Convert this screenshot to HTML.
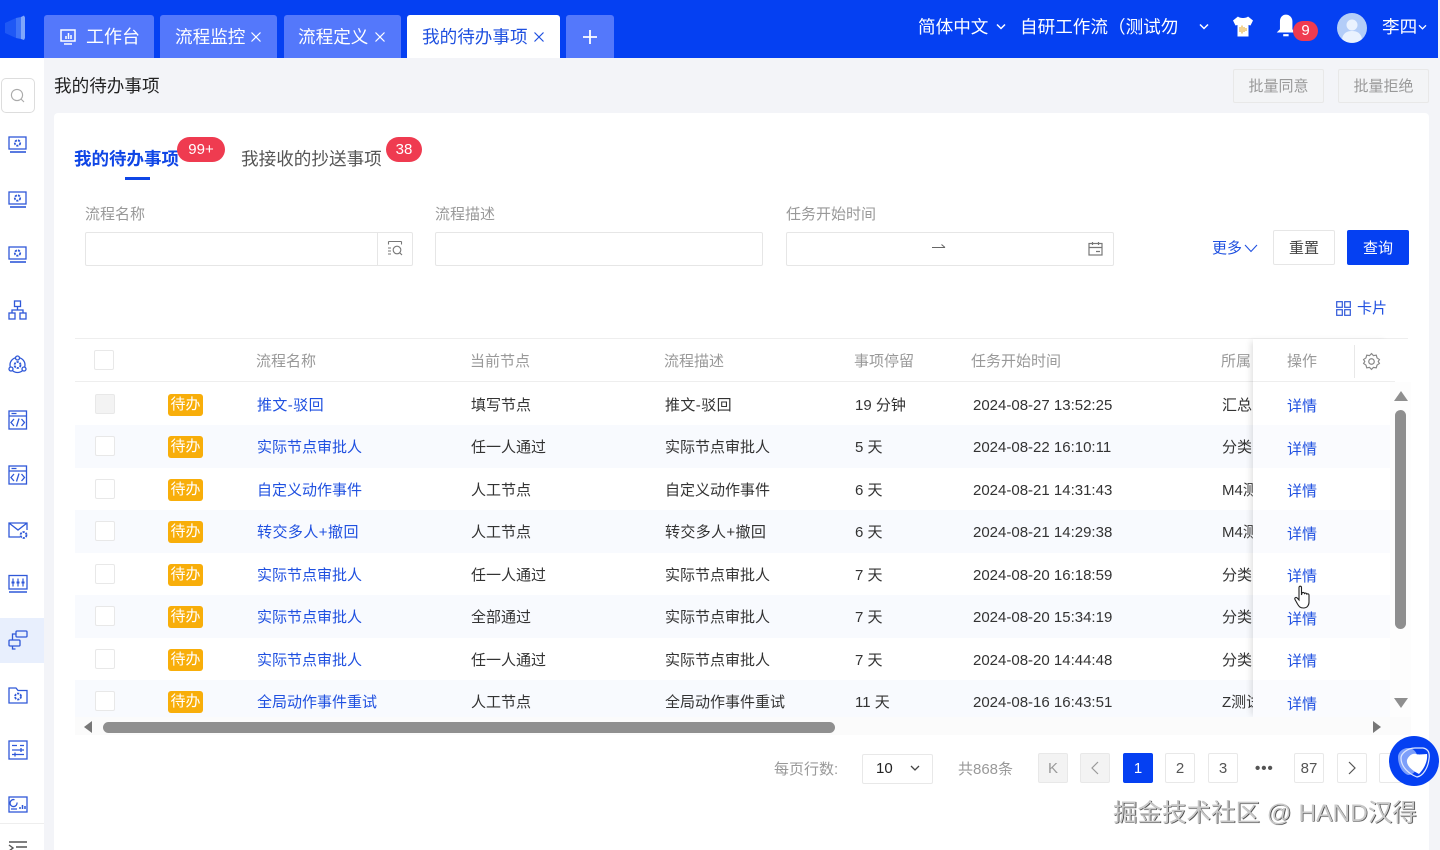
<!DOCTYPE html>
<html lang="zh-CN">
<head>
<meta charset="utf-8">
<title>我的待办事项</title>
<style>
html,body{margin:0;padding:0;width:1440px;height:850px;overflow:hidden;background:#f3f4f8;font-family:"Liberation Sans","Noto Sans CJK SC",sans-serif;color:#333}
div,span,svg{position:absolute;box-sizing:border-box}
.t{white-space:nowrap;line-height:20px;font-size:15px}
.tab{top:15px;height:43px;background:#5478fb;border-radius:3px 3px 0 0}
.tabt{top:25px;line-height:24px;font-size:17.6px;color:#fff;white-space:nowrap}
.g{color:#999}
.l{color:#1f50e0}
.hd{top:352px;color:#999}
.row{left:75px;width:1315px;height:42.5px}
.alt{background:#f8fafe}
.cb{left:95px;width:20px;height:20px;border:1px solid #e8e8e8;border-radius:2px;background:#fff}
.tag{left:168px;width:35px;height:22px;background:#f8ae0a;border-radius:3px;color:#fff;font-size:15px;line-height:22px;text-align:center;white-space:nowrap}
.input{top:232px;height:34px;background:#fff;border:1px solid #e6e6e6;border-radius:2px}
.pg{top:753px;width:30px;height:30px;background:#fff;border:1px solid #e8e8e8;border-radius:2px;text-align:center;line-height:29px;font-size:15px;color:#555}
.ic{left:8px;width:20px;height:20px;fill:none;stroke:#2f58d8;stroke-width:1.3}
.gr{stroke-width:1.8;stroke-dasharray:2.2 1}
</style>
</head>
<body>
<!-- sidebar -->
<div style="left:0;top:58px;width:44px;height:792px;background:#fff"></div>
<div style="left:0;top:618px;width:44px;height:45px;background:#e8effd"></div>
<div style="left:0;top:823px;width:44px;height:1px;background:#eee"></div>
<div style="left:1px;top:78px;width:34px;height:35px;border:1px solid #ddd;border-radius:5px;background:#fff"></div>
<svg style="left:9px;top:87px;width:17px;height:17px" viewBox="0 0 17 17" fill="none" stroke="#aaa" stroke-width="1.1"><circle cx="8" cy="8" r="5.6"/><path d="M12 12l3 3"/></svg>

<svg class="ic" style="top:135px" viewBox="0 0 20 20"><rect x="1" y="2" width="17" height="12"/><circle class="gr" cx="9.500" cy="8" r="2.700"/><path d="M2 17h16" stroke-width="1.600"/></svg>
<svg class="ic" style="top:190px" viewBox="0 0 20 20"><rect x="1" y="2" width="17" height="12"/><circle class="gr" cx="9.500" cy="8" r="2.700"/><path d="M2 17h16" stroke-width="1.600"/></svg>
<svg class="ic" style="top:245px" viewBox="0 0 20 20"><rect x="1" y="2" width="17" height="12"/><circle class="gr" cx="9.500" cy="8" r="2.700"/><path d="M2 17h16" stroke-width="1.600"/></svg>
<svg class="ic" style="top:300px" viewBox="0 0 20 20"><rect x="6.500" y="1" width="6" height="5.500"/><rect x="1" y="13" width="6" height="6"/><rect x="12" y="13" width="6" height="6"/><path d="M9.500 6.500v3.500M4 13v-3h11v3"/></svg>
<svg class="ic" style="top:355px" viewBox="0 0 20 20"><circle cx="9.500" cy="10" r="7.500"/><circle class="gr" cx="9.500" cy="10" r="3"/><circle cx="9.500" cy="3" r="2" fill="#fff"/><circle cx="3" cy="14" r="2" fill="#fff"/><circle cx="16" cy="14" r="2" fill="#fff"/></svg>
<svg class="ic" style="top:410px" viewBox="0 0 20 20"><rect x="1" y="1" width="17.500" height="18"/><path d="M1 6h17.500M3.500 3.500h5"/><path d="M6 9l-3 3.500 3 3.500M13.500 9l3 3.500-3 3.500M11 8.500l-2.500 8"/></svg>
<svg class="ic" style="top:465px" viewBox="0 0 20 20"><rect x="1" y="1" width="17.500" height="18"/><path d="M1 6h17.500M3.500 3.500h5"/><path d="M6 9l-3 3.500 3 3.500M13.500 9l3 3.500-3 3.500M11 8.500l-2.500 8"/></svg>
<svg class="ic" style="top:520px" viewBox="0 0 20 20"><path d="M19 10V3H1v14h11M1 3l9 7 9-7"/><circle class="gr" cx="15.500" cy="15" r="3"/></svg>
<svg class="ic" style="top:574px" viewBox="0 0 20 20"><rect x="1" y="1.500" width="18" height="13.500"/><path d="M5 4.500v8M10 4.500v8M15 4.500v8" stroke-width="1.200"/><path d="M3.500 8.500h3M8.500 8.500h3M13.500 8.500h3" stroke-width="2"/><path d="M1 18h18" stroke-width="1.500"/></svg>
<svg class="ic" style="top:630px" viewBox="0 0 20 20"><rect x="8" y="1" width="11" height="6" rx="1"/><rect x="1" y="10" width="11" height="6" rx="1"/><path d="M8 4H4.500v6M4.500 16v3h3"/></svg>
<svg class="ic" style="top:685px" viewBox="0 0 20 20"><path d="M1 3h7l2 2.500h9V18H1z"/><circle class="gr" cx="10" cy="11.500" r="3"/></svg>
<svg class="ic" style="top:740px" viewBox="0 0 20 20"><rect x="1" y="1" width="18" height="18"/><path d="M4 5.500h5M12 5.500h4M4 10h12M13 8v4M4 14.500h12M7 12.500v4"/></svg>
<svg class="ic" style="top:795px" viewBox="0 0 20 20"><rect x="1" y="2" width="18" height="15"/><path d="M9 7.500a3.500 3.500 0 1 1-2.500-2.800M3 14h6"/><path d="M12 14v-2M14.500 14v-4M17 14v-3" stroke-width="1.500"/></svg>
<svg style="left:8px;top:841px;width:20px;height:9px" viewBox="0 0 20 9" fill="none" stroke="#555" stroke-width="1.400"><path d="M1 1h18M8 6h11M1 4l4 3-4 3"/></svg>

<!-- header -->
<div style="left:0;top:0;width:1438px;height:58px;background:#0540f2"></div>
<svg style="left:4px;top:14px;width:22px;height:28px" viewBox="0 0 22 28"><path d="M1 9l11-5v20L1 19z" fill="#1f58f5"/><path d="M12 4l5-1v22l-5-1z" fill="#3f74f8"/><path d="M17 3l3-1.500 1 2V24l-1 2-3-1z" fill="#7fa6fb"/></svg>

<div class="tab" style="left:44px;width:110px"></div>
<svg style="left:59px;top:28px;width:18px;height:18px" viewBox="0 0 18 18" fill="none" stroke="#fff" stroke-width="1.500"><rect x="2" y="2" width="14" height="11"/><path d="M5 16h8"/><path d="M7 11V8M9.500 11V5M12 11V7"/></svg>
<div class="tabt" style="left:86px;font-size:18px">工作台</div>
<div class="tab" style="left:160px;width:117px"></div>
<div class="tabt" style="left:175px">流程监控</div>
<svg style="left:250px;top:31px;width:12px;height:12px" viewBox="0 0 12 12" stroke="#fff" stroke-width="1.200"><path d="M1.500 1.500l9 9M10.500 1.500l-9 9"/></svg>
<div class="tab" style="left:284px;width:117px"></div>
<div class="tabt" style="left:298px">流程定义</div>
<svg style="left:374px;top:31px;width:12px;height:12px" viewBox="0 0 12 12" stroke="#fff" stroke-width="1.200"><path d="M1.500 1.500l9 9M10.500 1.500l-9 9"/></svg>
<div class="tab" style="left:407px;width:153px;background:#fff"></div>
<div class="tabt" style="left:422px;color:#1f50e0">我的待办事项</div>
<svg style="left:533px;top:31px;width:12px;height:12px" viewBox="0 0 12 12" stroke="#1f50e0" stroke-width="1.200"><path d="M1.500 1.500l9 9M10.500 1.500l-9 9"/></svg>
<div class="tab" style="left:566px;width:48px"></div>
<svg style="left:582px;top:29px;width:16px;height:16px" viewBox="0 0 16 16" stroke="#fff" stroke-width="1.800"><path d="M8 1v14M1 8h14"/></svg>

<div class="tabt" style="left:918px;top:15px">简体中文</div>
<svg style="left:996px;top:23px;width:10px;height:8px" viewBox="0 0 10 8" fill="none" stroke="#fff" stroke-width="1.500"><path d="M1 1.500l4 4 4-4"/></svg>
<div class="tabt" style="left:1020px;top:15px">自研工作流（测试勿</div>
<svg style="left:1199px;top:23px;width:10px;height:8px" viewBox="0 0 10 8" fill="none" stroke="#fff" stroke-width="1.500"><path d="M1 1.500l4 4 4-4"/></svg>
<svg style="left:1232px;top:15px;width:22px;height:23px" viewBox="0 0 22 23"><path d="M6 1.500L1 5.500l2.500 5L5.500 10v11.500h11V10l2 .5 2.500-5-5-4c-1.500 2-8.500 2-10 0z" fill="#fff"/><path d="M8 12v5M10 10.500v8M12 12v5M14 13v3" stroke="#e9b64a" stroke-width="1.200"/></svg>
<svg style="left:1275px;top:13px;width:24px;height:26px" viewBox="0 0 22 24"><path d="M10 1.500c-3.500 0-5.500 3-5.500 6V15L1.500 18h17L16 15V7.500c0-3-2.500-6-6-6z" fill="#fff"/><path d="M7.500 20.500h5" stroke="#fff" stroke-width="2"/></svg>
<div style="left:1293px;top:21px;width:25px;height:20px;border-radius:10px;background:#ef3b50;color:#fff;font-size:15px;line-height:20px;text-align:center">9</div>
<svg style="left:1337px;top:13px;width:30px;height:30px" viewBox="0 0 30 30"><circle cx="15" cy="15" r="15" fill="#b3cdf8"/><circle cx="15" cy="12" r="5.500" fill="#eaf2fe"/><path d="M5 26c1-6 5-8 10-8s9 2 10 8c-5 5-15 5-20 0z" fill="#eaf2fe"/></svg>
<div class="tabt" style="left:1382px;top:15px">李四</div>
<svg style="left:1418px;top:24px;width:9px;height:7px" viewBox="0 0 10 8" fill="none" stroke="#fff" stroke-width="1.500"><path d="M1 1.500l4 4 4-4"/></svg>

<!-- page title -->
<div class="t" style="left:54px;top:75px;font-size:17.600px;line-height:22px;color:#222">我的待办事项</div>
<div style="left:1233px;top:69px;width:91px;height:34px;background:#f3f4f6;border:1px solid #e8e8e8;border-radius:2px;color:#999;font-size:15px;line-height:33px;text-align:center">批量同意</div>
<div style="left:1338px;top:69px;width:91px;height:34px;background:#f3f4f6;border:1px solid #e8e8e8;border-radius:2px;color:#999;font-size:15px;line-height:33px;text-align:center">批量拒绝</div>

<!-- card -->
<div style="left:54px;top:113px;width:1375px;height:737px;background:#fff;border-radius:4px 4px 0 0"></div>

<div class="t" style="left:74px;top:147.500px;font-size:17.500px;line-height:22px;font-weight:700;color:#0f46e6">我的待办事项</div>
<div style="left:177px;top:137px;width:48px;height:25px;border-radius:13px;background:#ef3b50;color:#fff;font-size:15px;line-height:25px;text-align:center">99+</div>
<div style="left:125px;top:176.500px;width:25px;height:3px;background:#0f46e6"></div>
<div class="t" style="left:241px;top:147.500px;font-size:17.600px;line-height:22px;color:#555">我接收的抄送事项</div>
<div style="left:386px;top:137px;width:36px;height:25px;border-radius:13px;background:#ef3b50;color:#fff;font-size:15px;line-height:25px;text-align:center">38</div>

<!-- filters -->
<div class="t g" style="left:85px;top:204.500px">流程名称</div>
<div class="t g" style="left:435px;top:204.500px">流程描述</div>
<div class="t g" style="left:786px;top:204.500px">任务开始时间</div>
<div class="input" style="left:85px;width:328px"></div>
<div style="left:377px;top:232px;width:1px;height:34px;background:#e6e6e6"></div>
<svg style="left:387px;top:240px;width:16px;height:16px" viewBox="0 0 16 16" fill="none" stroke="#777" stroke-width="1.100"><path d="M1.500 1.500h13M1.500 1.500v3M14.500 1.500v3M1 8h3M1 11h3M1 14h3"/><circle cx="10" cy="10" r="3.800"/><path d="M12.800 12.800l2.200 2.200"/></svg>
<div class="input" style="left:435px;width:328px"></div>
<div class="input" style="left:786px;width:328px"></div>
<svg style="left:931px;top:243px;width:15px;height:9px" viewBox="0 0 15 9" fill="none" stroke="#666" stroke-width="1.100"><path d="M1 4.500h13M10.500 1.500l3.500 3"/></svg>
<svg style="left:1088px;top:241px;width:15px;height:15px" viewBox="0 0 15 15" fill="none" stroke="#777" stroke-width="1.200"><rect x="1" y="2.500" width="13" height="11.500"/><path d="M1 6.500h13M4.500 1v3M10.500 1v3M8 10.500h4"/></svg>
<div class="t l" style="left:1212px;top:238.500px">更多</div>
<svg style="left:1244px;top:244px;width:14px;height:9px" viewBox="0 0 14 9" fill="none" stroke="#1f50e0" stroke-width="1.100"><path d="M1 1l6 6.500L13 1"/></svg>
<div style="left:1273px;top:230px;width:62px;height:35px;border:1px solid #e6e6e6;border-radius:2px;background:#fff;font-size:15px;line-height:36px;text-align:center;color:#444">重置</div>
<div style="left:1347px;top:230px;width:62px;height:35px;border-radius:2px;background:#0540f2;font-size:15px;line-height:37px;text-align:center;color:#fff">查询</div>
<svg style="left:1336px;top:301px;width:15px;height:15px" viewBox="0 0 15 15" fill="none" stroke="#2f58d8" stroke-width="1.200"><rect x=".7" y=".7" width="5.600" height="5.600"/><rect x="8.700" y=".7" width="5.600" height="5.600"/><rect x=".7" y="8.700" width="5.600" height="5.600"/><rect x="8.700" y="8.700" width="5.600" height="5.600"/></svg>
<div class="t l" style="left:1357px;top:299px">卡片</div>

<!-- table rows backgrounds -->
<div class="row alt" style="top:425px"></div>
<div class="row alt" style="top:510px"></div>
<div class="row alt" style="top:595px"></div>
<div class="row alt" style="top:680px;height:38px"></div>
<div style="left:75px;top:338px;width:1333px;height:1px;background:#eee"></div>
<div style="left:75px;top:381px;width:1320px;height:1px;background:#eee"></div>

<!-- table header -->
<div class="cb" style="left:94px;top:350px"></div>
<div class="t hd" style="left:256px">流程名称</div>
<div class="t hd" style="left:470px">当前节点</div>
<div class="t hd" style="left:664px">流程描述</div>
<div class="t hd" style="left:854px">事项停留</div>
<div class="t hd" style="left:971px">任务开始时间</div>
<div class="t hd" style="left:1221px">所属</div>

<!-- rows -->
<div class="cb" style="top:394px;background:#f3f3f3"></div><div class="tag" style="top:394px">待办</div>
<div class="t l" style="left:257px;top:396px;letter-spacing:.4px">推文-驳回</div><div class="t" style="left:471px;top:396px">填写节点</div><div class="t" style="left:665px;top:396px;letter-spacing:.4px">推文-驳回</div><div class="t" style="left:855px;top:396px">19 分钟</div><div class="t" style="left:973px;top:396px">2024-08-27 13:52:25</div><div class="t" style="left:1222px;top:396px">汇总</div>

<div class="cb" style="top:436px"></div><div class="tag" style="top:436px">待办</div>
<div class="t l" style="left:257px;top:438px">实际节点审批人</div><div class="t" style="left:471px;top:438px">任一人通过</div><div class="t" style="left:665px;top:438px">实际节点审批人</div><div class="t" style="left:855px;top:438px">5 天</div><div class="t" style="left:973px;top:438px">2024-08-22 16:10:11</div><div class="t" style="left:1222px;top:438px">分类</div>

<div class="cb" style="top:479px"></div><div class="tag" style="top:479px">待办</div>
<div class="t l" style="left:257px;top:481px">自定义动作事件</div><div class="t" style="left:471px;top:481px">人工节点</div><div class="t" style="left:665px;top:481px">自定义动作事件</div><div class="t" style="left:855px;top:481px">6 天</div><div class="t" style="left:973px;top:481px">2024-08-21 14:31:43</div><div class="t" style="left:1222px;top:481px">M4测</div>

<div class="cb" style="top:521px"></div><div class="tag" style="top:521px">待办</div>
<div class="t l" style="left:257px;top:523px;letter-spacing:.45px">转交多人+撤回</div><div class="t" style="left:471px;top:523px">人工节点</div><div class="t" style="left:665px;top:523px;letter-spacing:.35px">转交多人+撤回</div><div class="t" style="left:855px;top:523px">6 天</div><div class="t" style="left:973px;top:523px">2024-08-21 14:29:38</div><div class="t" style="left:1222px;top:523px">M4测</div>

<div class="cb" style="top:564px"></div><div class="tag" style="top:564px">待办</div>
<div class="t l" style="left:257px;top:566px">实际节点审批人</div><div class="t" style="left:471px;top:566px">任一人通过</div><div class="t" style="left:665px;top:566px">实际节点审批人</div><div class="t" style="left:855px;top:566px">7 天</div><div class="t" style="left:973px;top:566px">2024-08-20 16:18:59</div><div class="t" style="left:1222px;top:566px">分类</div>

<div class="cb" style="top:606px"></div><div class="tag" style="top:606px">待办</div>
<div class="t l" style="left:257px;top:608px">实际节点审批人</div><div class="t" style="left:471px;top:608px">全部通过</div><div class="t" style="left:665px;top:608px">实际节点审批人</div><div class="t" style="left:855px;top:608px">7 天</div><div class="t" style="left:973px;top:608px">2024-08-20 15:34:19</div><div class="t" style="left:1222px;top:608px">分类</div>

<div class="cb" style="top:649px"></div><div class="tag" style="top:649px">待办</div>
<div class="t l" style="left:257px;top:651px">实际节点审批人</div><div class="t" style="left:471px;top:651px">任一人通过</div><div class="t" style="left:665px;top:651px">实际节点审批人</div><div class="t" style="left:855px;top:651px">7 天</div><div class="t" style="left:973px;top:651px">2024-08-20 14:44:48</div><div class="t" style="left:1222px;top:651px">分类</div>

<div class="cb" style="top:691px"></div><div class="tag" style="top:691px">待办</div>
<div class="t l" style="left:257px;top:693px">全局动作事件重试</div><div class="t" style="left:471px;top:693px">人工节点</div><div class="t" style="left:665px;top:693px">全局动作事件重试</div><div class="t" style="left:855px;top:693px">11 天</div><div class="t" style="left:973px;top:693px">2024-08-16 16:43:51</div><div class="t" style="left:1222px;top:693px">Z测试</div>

<!-- fixed column -->
<div style="left:1253px;top:339px;width:137px;height:378px;background:#fff;box-shadow:-4px 0 6px -2px rgba(0,0,0,.12)"></div>
<div style="left:1253px;top:425px;width:137px;height:42.500px;background:#fafbfe"></div>
<div style="left:1253px;top:510px;width:137px;height:42.500px;background:#fafbfe"></div>
<div style="left:1253px;top:595px;width:137px;height:42.500px;background:#fafbfe"></div>
<div style="left:1253px;top:680px;width:137px;height:37px;background:#fafbfe"></div>
<div style="left:1253px;top:381px;width:137px;height:1px;background:#eee"></div>
<div class="t hd" style="left:1287px">操作</div>
<div style="left:1354px;top:345px;width:1px;height:33px;background:#e8e8e8"></div>
<svg style="left:1362px;top:352px;width:19px;height:19px" viewBox="0 0 24 24" fill="none" stroke="#888" stroke-width="1.500"><path d="M12 2l2.500 2.600 3.500-.6 1 3.500 3 2-1.500 2.500 1.500 2.500-3 2-1 3.500-3.500-.6L12 22l-2.500-2.600-3.500.6-1-3.500-3-2L3.500 12 2 9.500l3-2L6 4l3.500.6z"/><circle cx="12" cy="12" r="3.500"/></svg>
<div class="t l" style="left:1287px;top:397px">详情</div>
<div class="t l" style="left:1287px;top:440px">详情</div>
<div class="t l" style="left:1287px;top:482px">详情</div>
<div class="t l" style="left:1287px;top:525px">详情</div>
<div class="t l" style="left:1287px;top:567px">详情</div>
<div class="t l" style="left:1287px;top:610px">详情</div>
<div class="t l" style="left:1287px;top:652px">详情</div>
<div class="t l" style="left:1287px;top:695px">详情</div>
<!-- cursor -->
<svg style="left:1294px;top:585px;width:20px;height:25px" viewBox="0 0 20 25"><path d="M5 2.500c0-1.800 2.500-1.800 2.500 0V10l.5-2c1-1 2.300-.5 2.500.5.800-.8 2.200-.4 2.400.6.800-.6 2.100-.2 2.100 1V17c0 3.500-2 6-5.500 6S5 21.500 3.500 19L1 14.500c-.8-1.500 1-2.800 2.200-1.500L5 15z" fill="#fff" stroke="#222" stroke-width="1.100"/></svg>

<!-- scrollbars -->
<div style="left:1390px;top:382px;width:21px;height:335px;background:#fdfdfd"></div>
<svg style="left:1394px;top:391px;width:14px;height:10px" viewBox="0 0 14 10"><path d="M7 0l7 10H0z" fill="#8f8f8f"/></svg>
<div style="left:1395px;top:410px;width:11px;height:219px;background:#8f8f8f;border-radius:6px"></div>
<svg style="left:1394px;top:698px;width:14px;height:10px" viewBox="0 0 14 10"><path d="M7 10l7-10H0z" fill="#8f8f8f"/></svg>
<div style="left:75px;top:717px;width:1336px;height:18px;background:#fbfbfb"></div>
<svg style="left:83px;top:721px;width:10px;height:12px" viewBox="0 0 10 12"><path d="M1 6l8-6v12z" fill="#777"/></svg>
<div style="left:103px;top:722px;width:732px;height:10.500px;background:#8f8f8f;border-radius:6px"></div>
<svg style="left:1372px;top:721px;width:10px;height:12px" viewBox="0 0 10 12"><path d="M9 6L1 0v12z" fill="#777"/></svg>

<!-- pagination -->
<div class="t g" style="left:774px;top:759.500px">每页行数:</div>
<div style="left:862px;top:754px;width:71px;height:30px;border:1px solid #e8e8e8;border-radius:2px;background:#fff"></div>
<div class="t" style="left:876px;top:759px;color:#222">10</div>
<svg style="left:910px;top:765px;width:10px;height:7px" viewBox="0 0 10 7" fill="none" stroke="#444" stroke-width="1.300"><path d="M1 1l4 4 4-4"/></svg>
<div class="t g" style="left:958px;top:760px">共868条</div>
<div class="pg" style="left:1038px;background:#f3f3f3;color:#999">K</div>
<div class="pg" style="left:1080px;background:#f3f3f3"></div>
<svg style="left:1090px;top:761px;width:10px;height:14px" viewBox="0 0 10 14" fill="none" stroke="#999" stroke-width="1.200"><path d="M8 1L2 7l6 6"/></svg>
<div class="pg" style="left:1123px;background:#0540f2;border-color:#0540f2;color:#fff">1</div>
<div class="pg" style="left:1165px">2</div>
<div class="pg" style="left:1208px">3</div>
<div class="t" style="left:1255px;top:759px;font-weight:700;letter-spacing:1px;color:#555">•••</div>
<div class="pg" style="left:1294px">87</div>
<div class="pg" style="left:1337px"></div>
<svg style="left:1347px;top:761px;width:10px;height:14px" viewBox="0 0 10 14" fill="none" stroke="#555" stroke-width="1.200"><path d="M2 1l6 6-6 6"/></svg>
<div class="pg" style="left:1379px"></div>

<!-- floating circle -->
<div style="left:1389px;top:736px;width:50px;height:50px;border-radius:50%;background:#0540f2"></div>
<svg style="left:1389px;top:736px;width:50px;height:50px" viewBox="0 0 50 50"><path d="M9 21c0-5 5-9 10-9 6 0 10 5 10 13s-4 14-10 14c-6-2-10-10-10-18z" fill="#7d9ffa"/><path d="M12 22c0-4 6-10 14-10h8c5 1 7 5 6 11-1 9-6 17-12 18-8-3-16-10-16-19z" fill="none" stroke="#dfe8ff" stroke-width="1.200"/><path d="M18 24c2-5 6-7 9-6s9 0 11 0c1 7-3 15-8 20-6-3-13-8-12-14z" fill="#fff"/></svg>

<!-- watermark -->
<div class="t" style="left:1113px;top:797.500px;font-size:24.500px;line-height:32px;color:#c8c8c8;text-shadow:.7px .7px .5px #333">掘金技术社区 @ HAND汉得</div>
</body>
</html>
